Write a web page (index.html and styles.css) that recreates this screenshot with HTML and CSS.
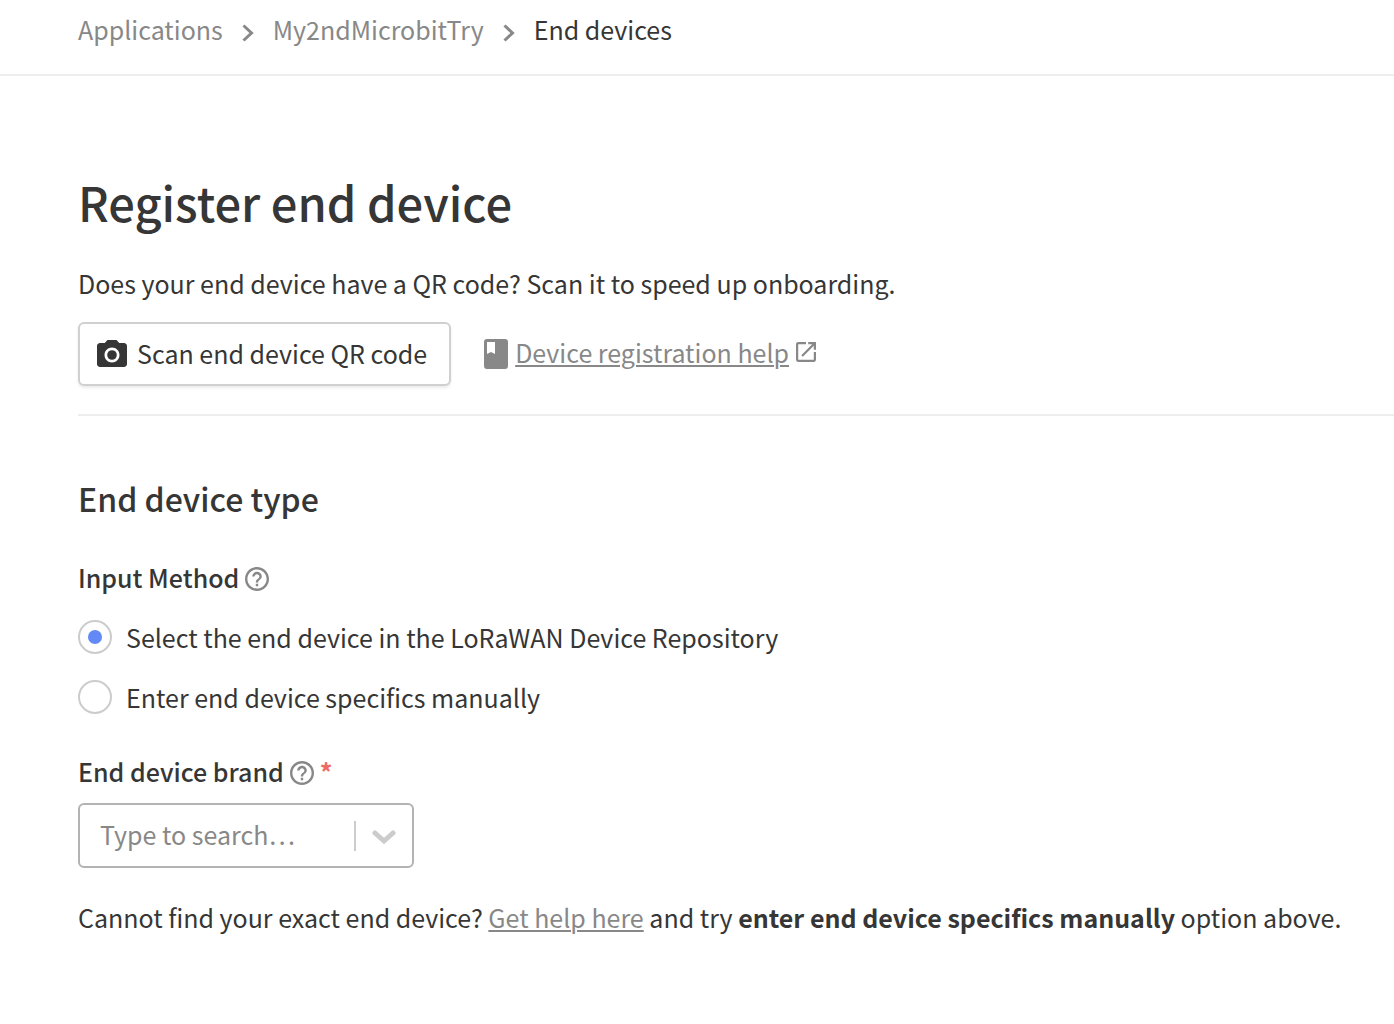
FILE: index.html
```html
<!DOCTYPE html>
<html lang="en">
<head>
<meta charset="utf-8">
<meta name="viewport" content="width=device-width, initial-scale=1">
<title>Register end device</title>
<link rel="stylesheet" href="styles.css">
</head>
<body>
<header class="topbar">
  <nav class="breadcrumbs" aria-label="Breadcrumb">
    <a class="crumb" href="#applications">Applications</a>
    <svg class="crumb-sep" viewBox="0 0 12 18" aria-hidden="true"><path d="M1.500 1.500l8 7.500-8 7.500"/></svg>
    <a class="crumb" href="#application">My2ndMicrobitTry</a>
    <svg class="crumb-sep" viewBox="0 0 12 18" aria-hidden="true"><path d="M1.500 1.500l8 7.500-8 7.500"/></svg>
    <span class="crumb-current" aria-current="page">End devices</span>
  </nav>
</header>
<main class="content">
  <h1 class="title">Register end device</h1>
  <p class="intro">Does your end device have a QR code? Scan it to speed up onboarding.</p>
  <div class="actions">
    <button class="scan-button" type="button">
      <svg class="camera" viewBox="2 2 20 18" aria-hidden="true"><circle cx="12" cy="12" r="3.2"/><path d="M9 2L7.170 4H4c-1.100 0-2 .9-2 2v12c0 1.100.9 2 2 2h16c1.100 0 2-.9 2-2V6c0-1.100-.9-2-2-2h-3.170L15 2H9zm3 15c-2.760 0-5-2.240-5-5s2.240-5 5-5 5 2.240 5 5-2.240 5-5 5z"/></svg>
      Scan end device QR code
    </button>
    <div class="help">
      <svg class="book" viewBox="0 0 24 30" aria-hidden="true"><path fill-rule="evenodd" d="M3 0h18a3 3 0 0 1 3 3v24a3 3 0 0 1-3 3H3a3 3 0 0 1-3-3V3a3 3 0 0 1 3-3zm0 3v12l4-2 4 2V3z"/></svg>
      <a class="link" href="#help">Device registration help</a>
      <svg class="external" viewBox="3 3 18 18" aria-hidden="true"><path d="M19 19H5V5h7V3H5c-1.110 0-2 .9-2 2v14c0 1.100.89 2 2 2h14c1.100 0 2-.9 2-2v-7h-2v7zM14 3v2h3.590l-9.830 9.830 1.410 1.410L19 6.410V10h2V3h-7z"/></svg>
    </div>
  </div>
  <form class="form">
    <h2 class="section-title">End device type</h2>
    <fieldset class="group">
      <legend class="legend"><span class="label-row">Input Method
        <svg class="question" viewBox="2 2 20 20" aria-hidden="true"><path d="M11 18h2v-2h-2v2zm1-16C6.480 2 2 6.480 2 12s4.480 10 10 10 10-4.480 10-10S17.520 2 12 2zm0 18c-4.410 0-8-3.590-8-8s3.590-8 8-8 8 3.590 8 8-3.590 8-8 8zm0-14c-2.210 0-4 1.790-4 4h2c0-1.100.9-2 2-2s2 .9 2 2c0 2-3 1.750-3 5h2c0-2.250 3-2.500 3-5 0-2.210-1.790-4-4-4z"/></svg>
      </span></legend>
      <label class="option"><input class="radio" type="radio" name="method" checked>Select the end device in the LoRaWAN Device Repository</label>
      <label class="option"><input class="radio" type="radio" name="method">Enter end device specifics manually</label>
    </fieldset>
    <label class="label-row brand-label" for="brand">End device brand
      <svg class="question" viewBox="2 2 20 20" aria-hidden="true"><path d="M11 18h2v-2h-2v2zm1-16C6.480 2 2 6.480 2 12s4.480 10 10 10 10-4.480 10-10S17.520 2 12 2zm0 18c-4.410 0-8-3.590-8-8s3.590-8 8-8 8 3.590 8 8-3.590 8-8 8zm0-14c-2.210 0-4 1.790-4 4h2c0-1.100.9-2 2-2s2 .9 2 2c0 2-3 1.750-3 5h2c0-2.250 3-2.500 3-5 0-2.210-1.790-4-4-4z"/></svg>
      <span class="required">*</span>
    </label>
    <div class="combo">
      <input class="combo-input" id="brand" type="text" placeholder="Type to search…" autocomplete="off">
      <button class="combo-toggle" type="button" aria-label="Show brands"><svg class="chevron" viewBox="0 0 24 16" aria-hidden="true"><path d="M3 4l9 8 9-8"/></svg></button>
    </div>
    <p class="hint">Cannot find your exact end device? <a class="link" href="#gethelp">Get help here</a> and try <strong>enter end device specifics manually</strong> option above.</p>
  </form>
</main>
</body>
</html>
```
FILE: styles.css
```css
* { box-sizing: border-box; }

body {
  margin: 0;
  background: #fff;
  color: #363636;
  font: 25px/40px "Noto Sans CJK SC", "Noto Sans", sans-serif;
}

h1, h2, p { margin: 0; }

button, input { font: inherit; color: inherit; }

.topbar {
  padding: 9px 78px 25px;
  border-bottom: 2px solid #eee;
}

.breadcrumbs { display: flex; align-items: center; }
.crumb { color: #888; text-decoration: none; }
.crumb-sep {
  width: 12px;
  height: 18px;
  margin: 8px 19px 0;
  fill: none;
  stroke: #888;
  stroke-width: 3;
}

.title, .section-title, .label-row { font-weight: 500; }

.content { padding: 92px 0 48px 78px; }
.title { font-size: 47px; line-height: 68px; }
.intro { margin-top: 27px; }

.actions {
  display: flex;
  align-items: center;
  gap: 33px;
  margin-top: 19px;
  padding-bottom: 28px;
  border-bottom: 2px solid #eee;
}

.scan-button {
  display: flex;
  align-items: center;
  gap: 10px;
  height: 64px;
  padding: 0 22px 2px 17px;
  background: #fff;
  border: 2px solid #d0d0d0;
  border-radius: 6px;
  box-shadow: 0 2px 3px rgba(0, 0, 0, .08);
}
.camera { width: 30px; height: 27px; fill: #363636; }

.help { display: flex; align-items: center; gap: 7px; padding-bottom: 4px; color: #888; }
.book { width: 24px; height: 30px; margin-top: 4px; fill: #888; }
.external { width: 20px; height: 20px; fill: #888; }
.link {
  color: #888;
  text-decoration: underline;
  text-decoration-thickness: 2px;
  text-underline-offset: 2px;
}

.section-title { margin-top: 58px; font-size: 32px; line-height: 48px; }

.group { margin: 35px 0 0; padding: 0; border: 0; }
.legend { padding: 0; }
.label-row { display: flex; align-items: center; gap: 6px; }
.question { width: 24px; height: 24px; margin-top: 4px; fill: #888; }
.option { display: flex; align-items: center; gap: 14px; margin-top: 20px; }

.radio {
  appearance: none;
  display: grid;
  place-items: center;
  width: 34px;
  height: 34px;
  margin: 0;
  border: 2px solid #ccc;
  border-radius: 50%;
}
.radio:checked::before {
  content: "";
  width: 14px;
  height: 14px;
  border-radius: 50%;
  background: #6289f5;
}

.brand-label { margin-top: 34px; }
.required { color: #ee6a62; font-weight: 700; }

.combo {
  display: flex;
  align-items: center;
  width: 336px;
  height: 65px;
  margin-top: 12px;
  border: 2px solid #b3b3b3;
  border-radius: 6px;
}
.combo-input {
  flex: 1;
  min-width: 0;
  padding: 0 0 4px 20px;
  border: 0;
  background: none;
}
.combo-input::placeholder { color: #888; opacity: 1; }
.combo-toggle {
  display: grid;
  place-items: center;
  width: 58px;
  height: 30px;
  padding: 2px 0 0;
  background: none;
  border: 0;
  border-left: 2px solid #ccc;
}
.chevron {
  width: 24px;
  height: 16px;
  fill: none;
  stroke: #ccc;
  stroke-width: 5;
  stroke-linecap: round;
}

.hint { margin-top: 29px; }
```
